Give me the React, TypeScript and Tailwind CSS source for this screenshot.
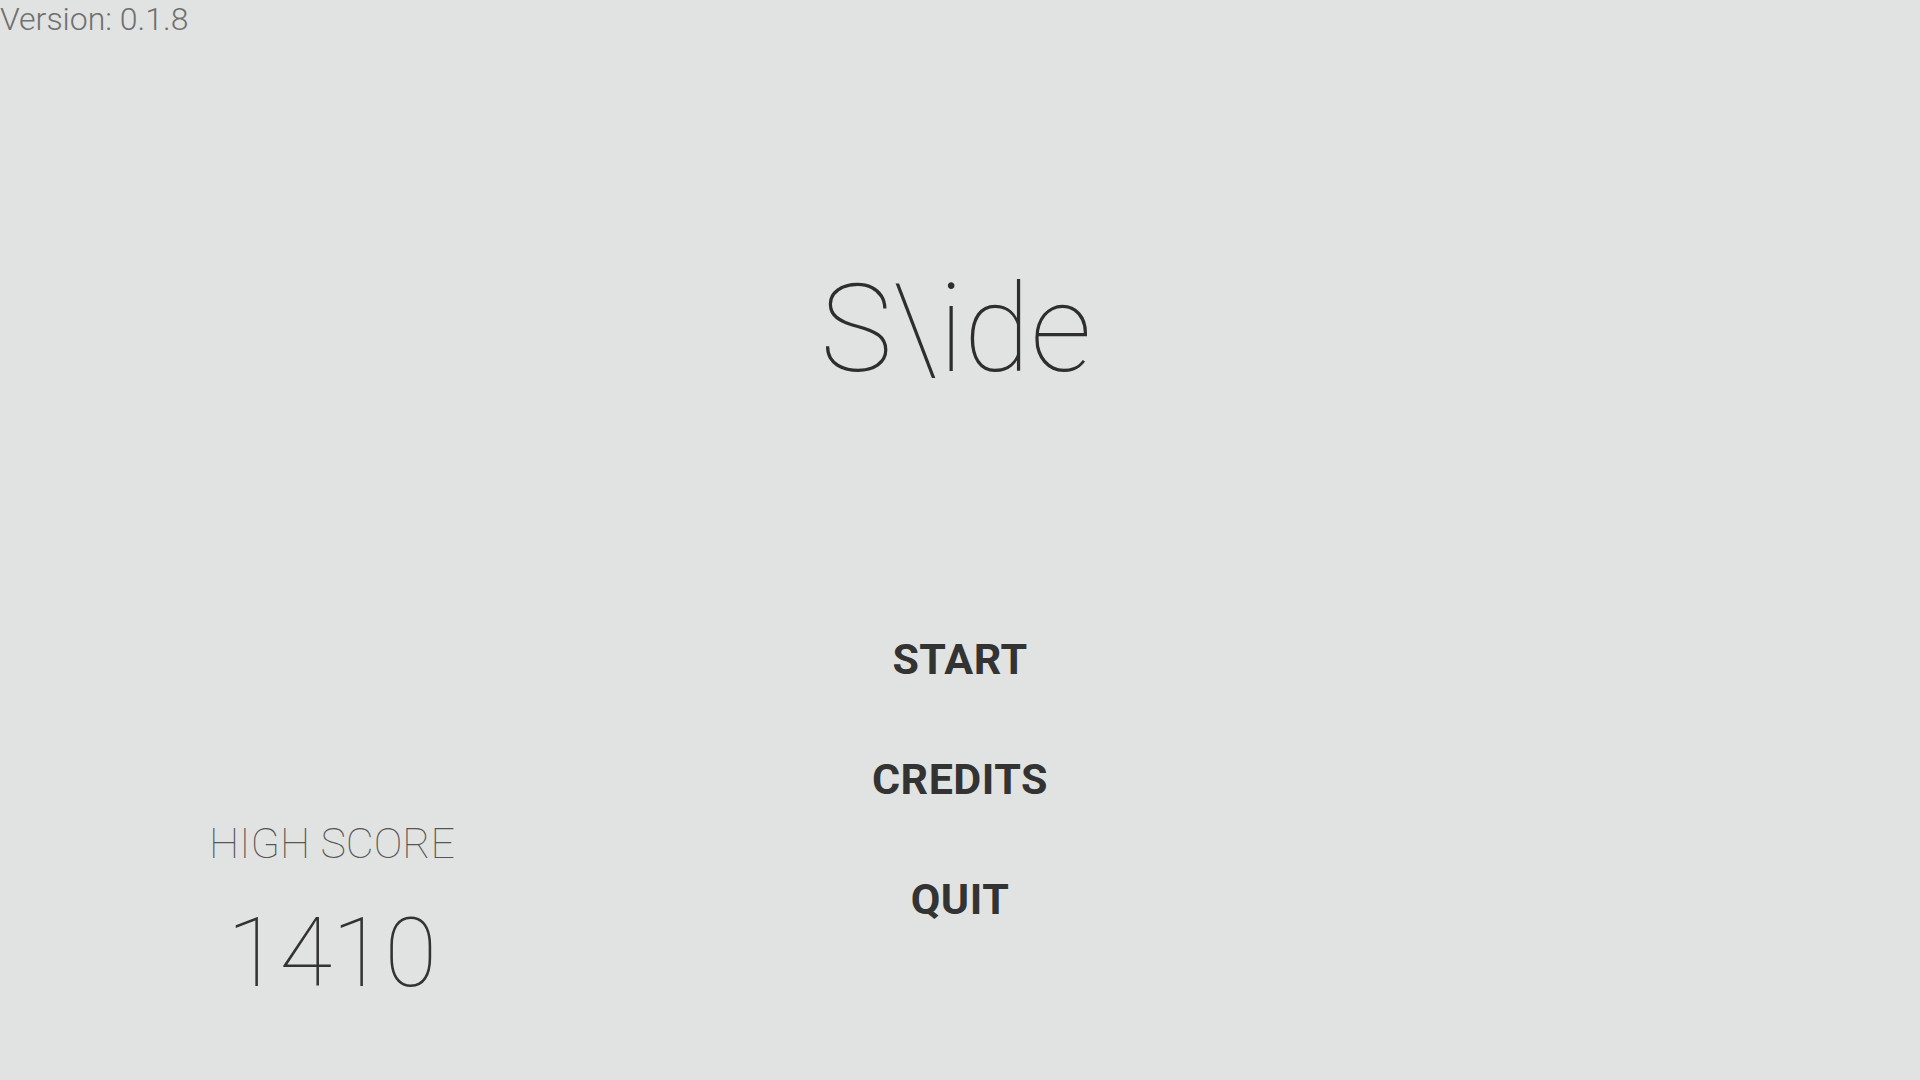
const menuItems = ["START", "CREDITS", "QUIT"];

export default function App() {
	return (
		<div className="flex h-screen w-full flex-col overflow-hidden bg-[#e1e3e2] font-['Roboto',sans-serif] text-[#333333]">
			{/* versao no canto */}
			<div className="pt-[3px] text-[32px] leading-none font-light text-[#707070]">
				Version: 0.1.8
			</div>

			<h1 className="mt-[234px] pr-[8px] text-center text-[122px] leading-none font-thin text-[#2e2e2e]">
				S\ide
			</h1>

			<div className="mt-[247px] grid grid-cols-[664px_592px_664px]">
				<div className="flex flex-col items-center pt-[184px]">
					<div className="text-[43px] leading-none font-thin text-[#555555]">
						HIGH SCORE
					</div>
					<div className="mt-[40px] text-[96px] leading-none font-thin">
						1410
					</div>
				</div>

				<div className="flex flex-col items-center gap-[77px]">
					{menuItems.map((item) => (
						<button
							key={item}
							className="text-[43px] leading-none font-bold tracking-[0.5px] text-[#333333]"
						>
							{item}
						</button>
					))}
				</div>

				<div />
			</div>
		</div>
	);
}
